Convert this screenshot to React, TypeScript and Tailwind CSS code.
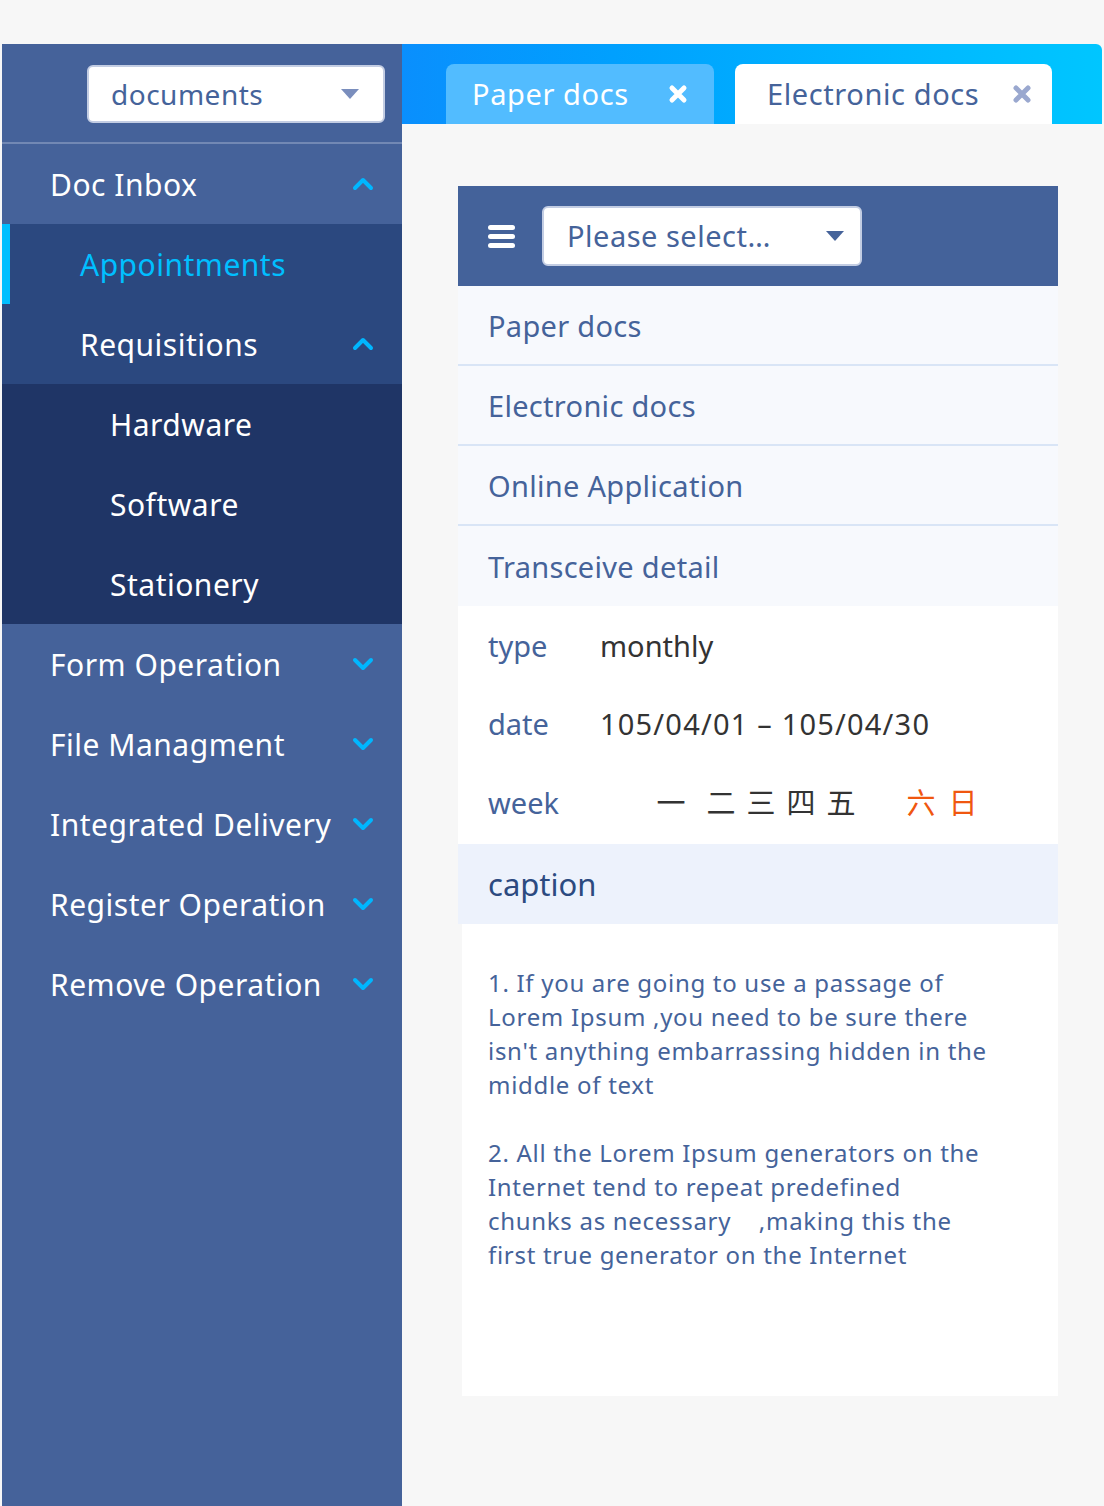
import React from "react";

const Chevron = ({ up }: { up?: boolean }) => (
  <svg width="22" height="14" viewBox="0 0 22 14" className="shrink-0">
    <polyline
      points={up ? "3,11 11,3 19,11" : "3,3 11,11 19,3"}
      fill="none"
      stroke="#00b7ff"
      strokeWidth="4"
      strokeLinecap="round"
      strokeLinejoin="round"
    />
  </svg>
);

const Cross = ({ color }: { color: string }) => (
  <svg width="20" height="20" viewBox="0 0 20 20" className="shrink-0">
    <path d="M4 4 L16 16 M16 4 L4 16" stroke={color} strokeWidth="5" strokeLinecap="round" />
  </svg>
);

const Caret = ({ color }: { color: string }) => (
  <svg width="18" height="10" viewBox="0 0 18 10">
    <polygon points="0,0 18,0 9,10" fill={color} />
  </svg>
);

const menu = [
  { label: "Form Operation" },
  { label: "File Managment" },
  { label: "Integrated Delivery" },
  { label: "Register Operation" },
  { label: "Remove Operation" },
];

const lines1 = [
  "1. If you are going to use a passage of",
  "Lorem Ipsum ,you need to be sure there",
  "isn't anything embarrassing hidden in the",
  "middle of text",
];
const lines2 = [
  "2. All the Lorem Ipsum generators on the",
  "Internet tend to repeat predefined",
  "chunks as necessary    ,making this the",
  "first true generator on the Internet",
];

export default function App() {
  return (
    <div className="flex min-h-[1506px] w-[1104px] bg-[#f7f7f7] pt-[44px] font-['Noto_Sans','Noto_Sans_CJK_SC',sans-serif]">
      {/* Sidebar */}
      <aside className="ml-[2px] flex w-[400px] flex-col bg-[#45629a] tracking-[0.5px] text-white">
        <div className="flex h-[100px] items-start border-b-2 border-[#7288b4] pl-[85px] pt-[21px]">
          <div className="flex h-[58px] w-[298px] items-center justify-between rounded-[6px] border-2 border-[#c3cde3] bg-white pl-[22px] pr-[24px] text-[28px] text-[#45639a]">
            documents
            <Caret color="#7a8ebd" />
          </div>
        </div>

        <div className="flex h-[80px] items-center justify-between pl-[48px] pr-[28px] text-[30px]">
          Doc Inbox
          <Chevron up />
        </div>
        <div className="flex h-[80px] items-center border-l-[8px] border-[#00bfff] bg-[#2b487f] pl-[70px] text-[30px] text-[#00bfff]">
          Appointments
        </div>
        <div className="flex h-[80px] items-center justify-between bg-[#2b487f] pl-[78px] pr-[28px] text-[30px]">
          Requisitions
          <Chevron up />
        </div>
        <div className="bg-[#1f3566]">
          {["Hardware", "Software", "Stationery"].map((s) => (
            <div key={s} className="flex h-[80px] items-center pl-[108px] text-[30px]">
              {s}
            </div>
          ))}
        </div>
        {menu.map((m) => (
          <div key={m.label} className="flex h-[80px] items-center justify-between pl-[48px] pr-[28px] text-[30px]">
            {m.label}
            <Chevron />
          </div>
        ))}
      </aside>

      {/* Main */}
      <main className="flex w-[700px] flex-col">
        <div className="flex h-[80px] items-end gap-[21px] rounded-tr-[6px] bg-gradient-to-r from-[#0a8ffd] to-[#00c6ff] pl-[44px] tracking-[0.6px]">
          <div className="flex h-[60px] w-[268px] items-center justify-between rounded-t-[8px] bg-[#52bcff] pl-[26px] pr-[26px] text-[29px] text-white">
            Paper docs
            <Cross color="#ffffff" />
          </div>
          <div className="flex h-[60px] w-[317px] items-center justify-between rounded-t-[8px] bg-white pl-[32px] pr-[20px] text-[29px] text-[#45639a]">
            Electronic docs
            <Cross color="#9aa8cf" />
          </div>
        </div>

        <div className="ml-[56px] mt-[62px] w-[600px]">
          <div className="flex h-[100px] items-center bg-[#44629a] pl-[30px]">
            <div className="flex w-[27px] flex-col gap-[4px]">
              <span className="h-[5px] rounded-full bg-white" />
              <span className="h-[5px] rounded-full bg-white" />
              <span className="h-[5px] rounded-full bg-white" />
            </div>
            <div className="ml-[27px] flex h-[60px] w-[320px] items-center justify-between rounded-[6px] border-2 border-[#c3cde3] bg-white pl-[23px] pr-[16px] text-[29px] tracking-[0.5px] text-[#45639a]">
              Please select…
              <Caret color="#45639a" />
            </div>
          </div>

          <div className="bg-[#f7f9fd] text-[29px] tracking-[0.3px] text-[#45639a]">
            {["Paper docs", "Electronic docs", "Online Application"].map((t) => (
              <div key={t} className="flex h-[80px] items-center border-b-2 border-[#d9e5f6] pl-[30px] pt-[2px]">
                {t}
              </div>
            ))}
            <div className="flex h-[80px] items-center pl-[30px] pt-[2px]">Transceive detail</div>
          </div>

          <div className="flex h-[238px] flex-col justify-center bg-white text-[29px]">
            <div className="flex h-[80px] items-center pl-[30px]">
              <span className="w-[112px] text-[#45639a]">type</span>
              <span className="text-[#333333]">monthly</span>
            </div>
            <div className="flex h-[76px] items-center pl-[30px]">
              <span className="w-[112px] text-[#45639a]">date</span>
              <span className="tracking-[1.2px] text-[#333333]">105/04/01 – 105/04/30</span>
            </div>
            <div className="flex h-[82px] items-center pl-[30px]">
              <span className="w-[112px] text-[#45639a]">week</span>
              <div className="flex text-[#333333]">
                <span className="ml-[56px] w-[30px] text-center">一</span>
                <span className="ml-[20px] w-[30px] text-center">二</span>
                <span className="ml-[10px] w-[30px] text-center">三</span>
                <span className="ml-[10px] w-[30px] text-center">四</span>
                <span className="ml-[10px] w-[30px] text-center">五</span>
                <span className="ml-[50px] w-[30px] text-center text-[#f0570f]">六</span>
                <span className="ml-[12px] w-[30px] text-center text-[#f0570f]">日</span>
              </div>
            </div>
          </div>

          <div className="flex h-[80px] items-center bg-[#edf2fc] pl-[30px] text-[31px] text-[#2c4a80]">
            caption
          </div>

          <div className="ml-[4px] h-[472px] bg-white pl-[26px] pt-[42px] text-[24px] leading-[34px] tracking-[0.7px] text-[#45639a]">
            {lines1.map((l) => (
              <div key={l} className="whitespace-pre">{l}</div>
            ))}
            <div className="h-[34px]" />
            {lines2.map((l) => (
              <div key={l} className="whitespace-pre">{l}</div>
            ))}
          </div>
        </div>
      </main>
    </div>
  );
}
